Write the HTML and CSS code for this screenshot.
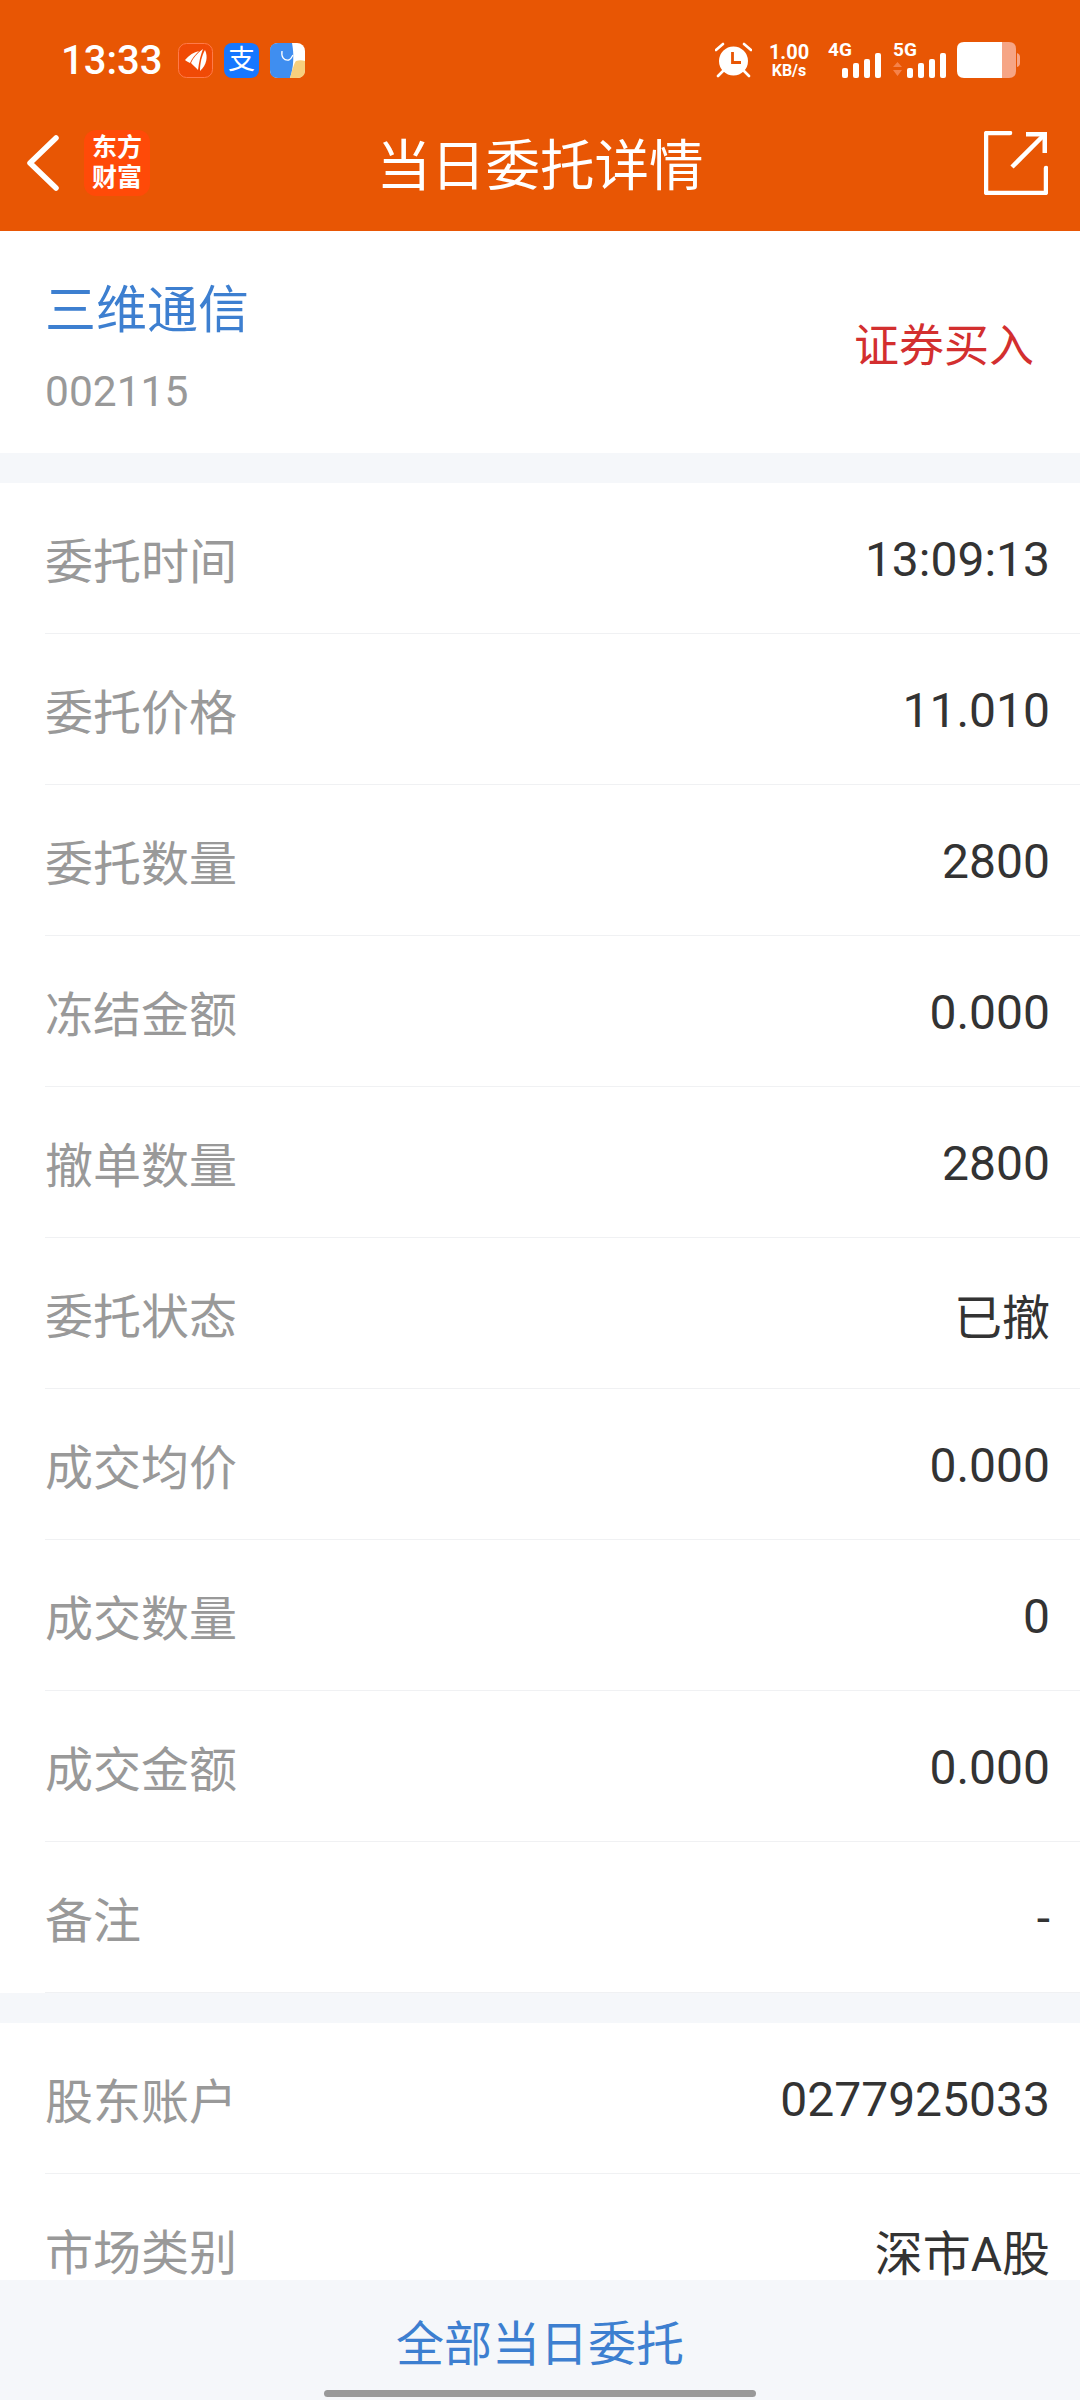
FILE: index.html
```html
<!DOCTYPE html>
<html>
    <head>
        <title>当日委托详情</title>
        <meta charset="utf-8">
        <link rel="stylesheet" href="styles.css">
    </head>
    <body>
        <div id="top">
            <div id="statusBar">
                <div class="status_side">
                    <span id="clock">13:33</span>
                    <div class="app_icons">
                        <svg class="app_icon" viewBox="0 0 35 35">
                            <rect x="0.5" y="0.5" width="34" height="34" rx="8" fill="#f04a06" stroke="#ff7a4a"/>
                            <path d="M7 17C11 12 16 9 21 8C18 11 14 15 12 20C10 19 8 18 7 17Z" fill="#fff"/>
                            <path d="M13 20C15 15 19 10 25 6C23 11 21 18 20 27C18 25 15 22 13 20Z" fill="#fff"/>
                            <path d="M22 27C22 20 24 12 27 7C30 13 29 22 22 28Z" fill="#fff"/>
                        </svg>
                        <div class="alipay">支</div>
                        <svg class="app_icon" viewBox="0 0 35 35">
                            <rect width="35" height="35" rx="8" fill="#fff"/>
                            <path d="M8 0H22C24 10 24 24 20 35H8Q0 35 0 27V8Q0 0 8 0Z" fill="#3f8ef0"/>
                            <path d="M35 18V27Q35 35 27 35H20C22 28 24 20 26 18C29 17 32 17 35 18Z" fill="#f7cf7e"/>
                            <path d="M12 8C11 14 14 18 19 17C21 16 22 14 23 12" fill="none" stroke="#fff" stroke-width="1.3"/>
                        </svg>
                    </div>
                </div>
                <div class="status_side">
                    <svg id="alarm" viewBox="0 0 37 36">
                        <path d="M1 8L8 2M36 8L29 2M8 29L3 34M29 29L34 34" stroke="#fff" stroke-width="2.6" stroke-linecap="round"/>
                        <circle cx="18.5" cy="19" r="14.5" fill="#fff"/>
                        <path d="M17.5 10V20.5H26" fill="none" stroke="#e85604" stroke-width="2.8"/>
                    </svg>
                    <div id="speed">
                        <span id="speedNum">1.00</span>
                        <span id="speedUnit">KB/s</span>
                    </div>
                    <svg class="signal" viewBox="0 0 54 36">
                        <text class="signal_text" x="0" y="14">4G</text>
                        <rect x="14" y="26" width="6" height="10" rx="2" fill="#fff"/>
                        <rect x="25" y="21" width="6" height="15" rx="2" fill="#fff"/>
                        <rect x="36" y="17" width="6" height="19" rx="2" fill="#fff"/>
                        <rect x="47" y="11" width="6" height="25" rx="2" fill="#fff"/>
                    </svg>
                    <svg class="signal" viewBox="0 0 54 36">
                        <text class="signal_text" x="0" y="14">5G</text>
                        <path d="M0 25L4.5 20L9 25ZM0 28L4.5 34L9 28Z" fill="#f5824a"/>
                        <rect x="14" y="26" width="6" height="10" rx="2" fill="#fff"/>
                        <rect x="25" y="21" width="6" height="15" rx="2" fill="#fff"/>
                        <rect x="36" y="17" width="6" height="19" rx="2" fill="#fff"/>
                        <rect x="47" y="11" width="6" height="25" rx="2" fill="#fff"/>
                    </svg>
                    <svg id="battery" viewBox="0 0 63 36">
                        <path d="M45 0H52Q59 0 59 7V29Q59 36 52 36H45Z" fill="#f6a585"/>
                        <path d="M60 11Q63 12 63 15V21Q63 24 60 25Z" fill="#f6a585"/>
                        <path d="M7 0H45V36H7Q0 36 0 29V7Q0 0 7 0Z" fill="#fff"/>
                    </svg>
                </div>
            </div>

            <div id="navBar">
                <div class="nav_left">
                    <svg id="backIcon" viewBox="0 0 34 56">
                        <path d="M30 3L4 28L30 53" fill="none" stroke="#fff" stroke-width="5.5" stroke-linecap="round" stroke-linejoin="round"/>
                    </svg>
                    <div id="logo">
                        <span>东方</span>
                        <span>财富</span>
                    </div>
                </div>
                <h1>当日委托详情</h1>
                <div class="nav_right">
                    <svg id="shareIcon" viewBox="0 0 64 64">
                        <path d="M26 2H3Q2 2 2 3V61Q2 62 3 62H61Q62 62 62 61V37" fill="none" stroke="#fff" stroke-width="4.5" stroke-linecap="round"/>
                        <path d="M28 36L60 4" fill="none" stroke="#fff" stroke-width="4.5"/>
                        <path d="M42 1H63V22H58.5V5.5H42Z" fill="#fff"/>
                    </svg>
                </div>
            </div>
        </div>

        <div id="content">
            <div id="stock">
                <div id="stockInfo">
                    <div id="stockName">三维通信</div>
                    <div id="stockCode">002115</div>
                </div>
                <div id="orderType">证券买入</div>
            </div>

            <div class="group">
                <div class="row"><span class="label">委托时间</span><span class="value">13:09:13</span></div>
                <div class="row"><span class="label">委托价格</span><span class="value">11.010</span></div>
                <div class="row"><span class="label">委托数量</span><span class="value">2800</span></div>
                <div class="row"><span class="label">冻结金额</span><span class="value">0.000</span></div>
                <div class="row"><span class="label">撤单数量</span><span class="value">2800</span></div>
                <div class="row"><span class="label">委托状态</span><span class="value">已撤</span></div>
                <div class="row"><span class="label">成交均价</span><span class="value">0.000</span></div>
                <div class="row"><span class="label">成交数量</span><span class="value">0</span></div>
                <div class="row"><span class="label">成交金额</span><span class="value">0.000</span></div>
                <div class="row"><span class="label">备注</span><span class="value">-</span></div>
            </div>

            <div class="group">
                <div class="row"><span class="label">股东账户</span><span class="value">0277925033</span></div>
                <div class="row"><span class="label">市场类别</span><span class="value">深市A股</span></div>
            </div>
        </div>

        <div id="footer">
            <div id="allOrders">全部当日委托</div>
            <div id="homeBar"></div>
        </div>
    </body>
</html>
```

FILE: styles.css
```css
* {box-sizing: border-box;}
body {width: 1080px; height: 2400px; margin: 0px; overflow: hidden; display: flex; flex-direction: column; background: #f5f7fa; font-family: Roboto, "Noto Sans CJK SC", sans-serif;}

#top {height: 231px; flex-shrink: 0; background: #e85604; color: #fff;}

#statusBar {height: 120px; padding: 0px 60px 0px 61px; display: flex; justify-content: space-between; align-items: center;}
.status_side {display: flex; align-items: center;}
#clock {font-size: 40px; font-weight: 500; width: 117px;}
.app_icons {display: flex; gap: 11px;}
.app_icon {width: 35px; height: 35px; display: block;}
.alipay {width: 35px; height: 35px; border-radius: 8px; background: #1677ff; color: #fff; font-size: 27px; line-height: 34px; text-align: center;}

#alarm {width: 37px; height: 36px; margin-right: 17px;}
#speed {width: 40px; display: flex; flex-direction: column; align-items: center; margin-right: 19px;}
#speedNum {font-size: 20px; font-weight: 700; line-height: 20px;}
#speedUnit {font-size: 16px; font-weight: 700; line-height: 17px;}
.signal {width: 54px; height: 36px; margin-right: 11px; overflow: visible;}
.signal_text {font-family: Roboto, sans-serif; font-size: 19px; font-weight: 700; fill: #fff;}
#battery {width: 63px; height: 36px; margin-left: -1px;}

#navBar {height: 86px; display: grid; grid-template-columns: 1fr auto 1fr; align-items: center;}
.nav_left {display: flex; align-items: center; padding-left: 26px;}
#backIcon {width: 34px; height: 56px; margin-right: 24px;}
#logo {width: 66px; height: 66px; border-radius: 12px; background: #ff4a08; display: flex; flex-direction: column; align-items: center; justify-content: center; font-size: 25px; font-weight: 700; line-height: 30px;}
h1 {margin: 0px; padding-bottom: 3px; font-size: 54.5px; font-weight: 400; color: #fff;}
.nav_right {display: flex; justify-content: flex-end; padding-right: 32px;}
#shareIcon {width: 64px; height: 64px;}

#content {flex: 1; min-height: 0; overflow: hidden;}

#stock {height: 222px; padding: 0px 46px 0px 45px; background: #fff; display: flex; justify-content: space-between; align-items: center;}
#stockInfo {padding-top: 8px;}
#stockName {font-size: 51px; line-height: 70px; color: #3d7fd0;}
#stockCode {font-size: 42.5px; line-height: 50px; margin-top: 21px; color: #999;}
#orderType {font-size: 45px; color: #d32f2f;}

.group {margin-top: 30px; padding-left: 45px; background: #fff;}
.row {height: 151px; padding-right: 30px; border-bottom: 1.5px solid #f0f1f3; display: flex; justify-content: space-between; align-items: center;}
.label {font-size: 48px; color: #999;}
.value {font-size: 48px; color: #333; padding-top: 2px;}

#footer {height: 120px; flex-shrink: 0; background: #f5f7fa; display: flex; flex-direction: column; align-items: center;}
#allOrders {height: 110px; font-size: 48px; line-height: 130px; color: #3d7fd0;}
#homeBar {width: 432px; height: 7px; border-radius: 4px; background: #999;}
```
